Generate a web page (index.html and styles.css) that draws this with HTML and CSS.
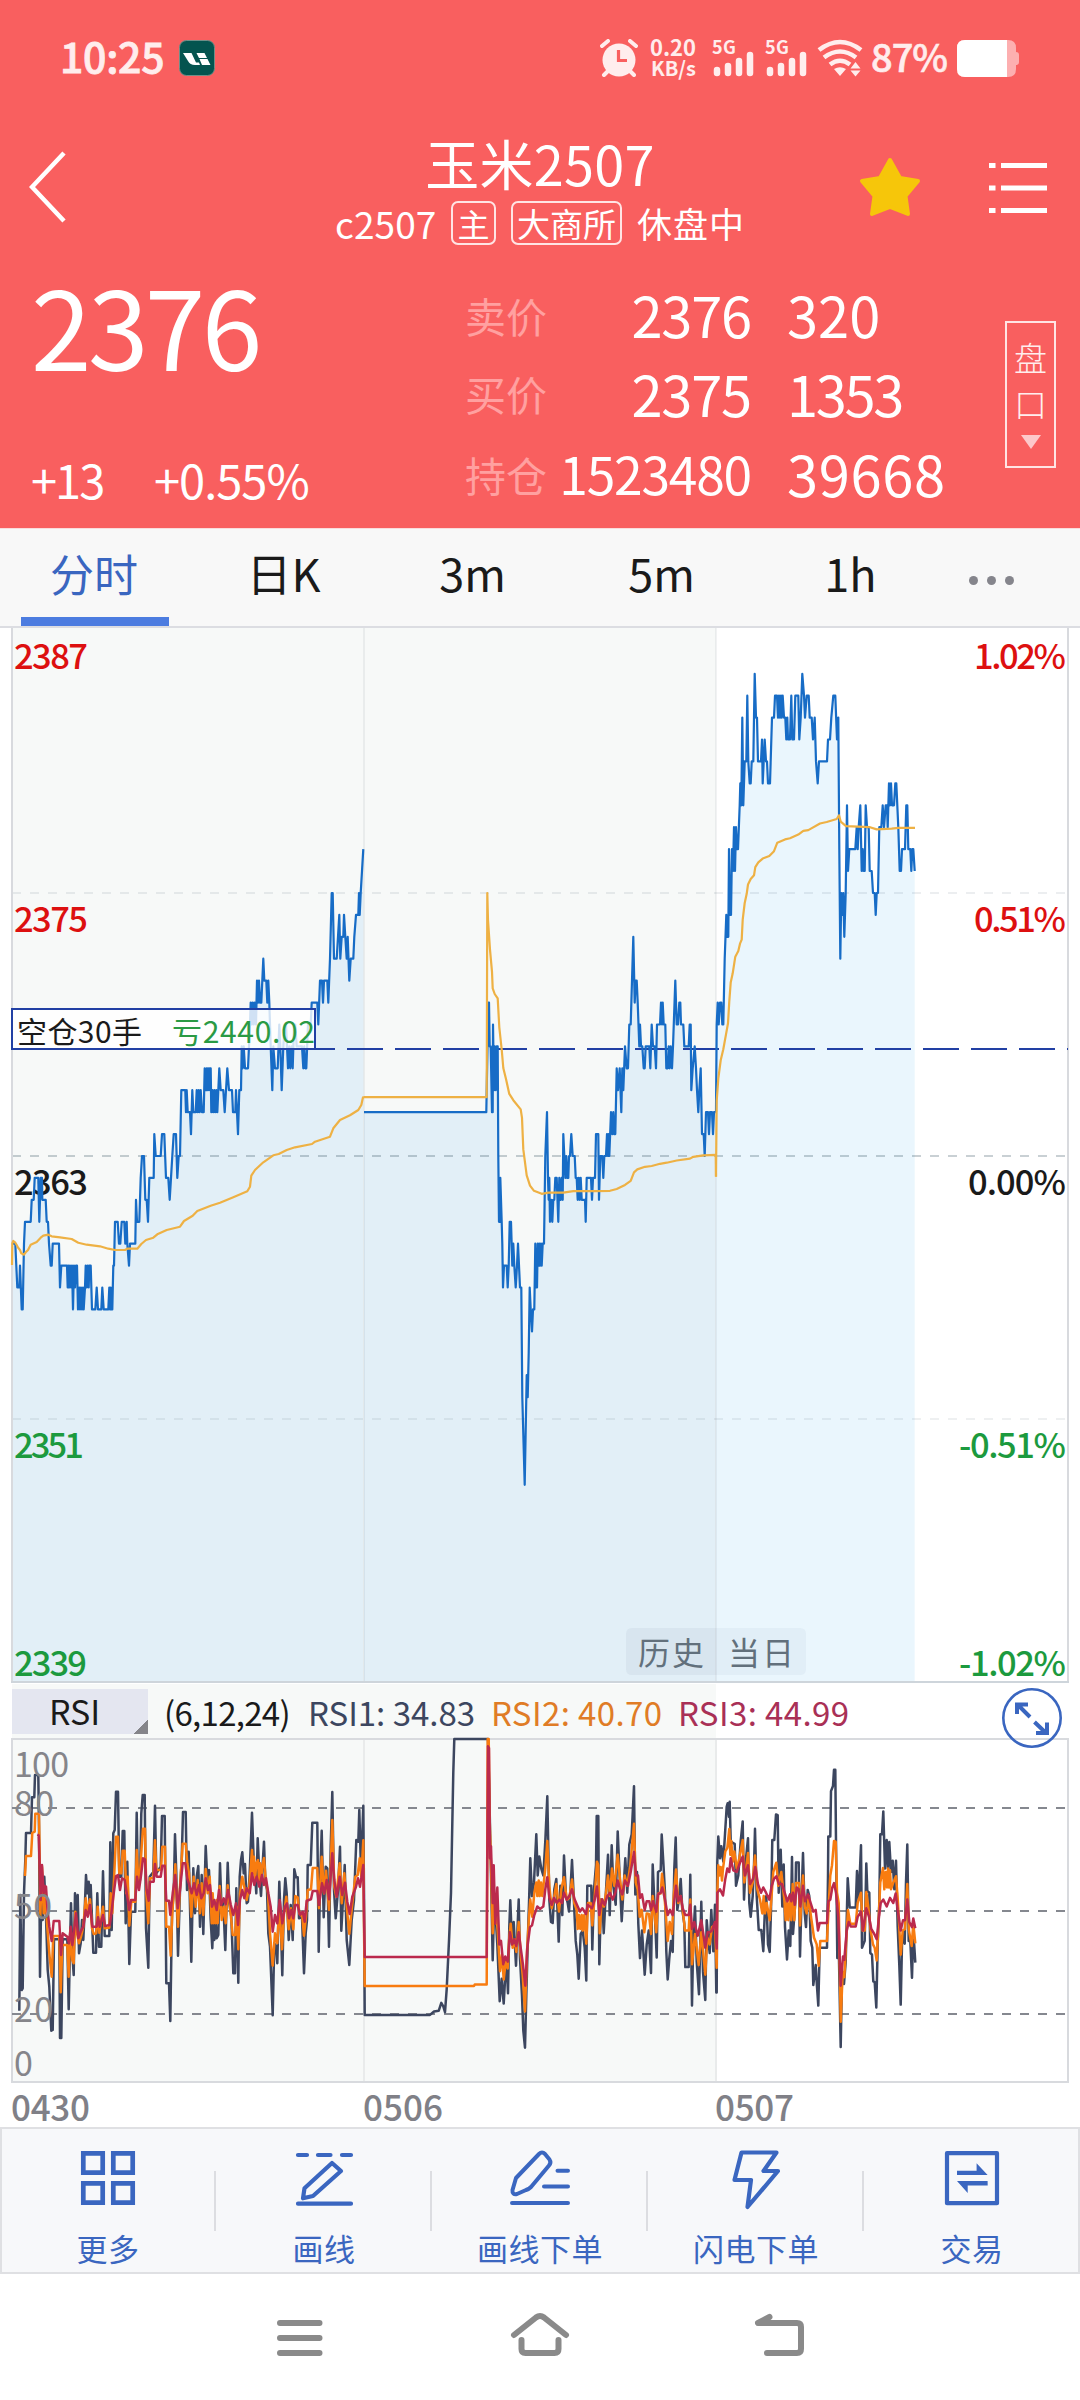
FILE: index.html
```
<!DOCTYPE html>
<html lang="zh-CN">
<head>
<meta charset="utf-8">
<title>玉米2507</title>
<link rel="stylesheet" href="styles.css">
</head>
<body>
<header class="top">
  <div class="status">
    <span class="clock">10:25</span>
    <svg class="app-badge" viewBox="0 0 36 36"><rect x=".5" y=".5" width="35" height="35" rx="7" fill="#04544f" stroke="#6f8f88"/><path d="M4 13h8.500l4.500 9.500h3l1 2.500H16Q11 25 9 21zM17.500 13h8l2.500 5H20zM20.500 19h8l3 6H23z" fill="#fff"/></svg>
    <svg class="alarm" viewBox="0 0 38 38"><circle cx="19" cy="21" r="16.500" fill="#ffeded"/><path d="M2 7l6-5M36 7l-6-5M8 32l-4 4M30 32l4 4" stroke="#ffeded" stroke-width="4" stroke-linecap="round"/><path d="M18.500 11v10.500H27" fill="none" stroke="#f95f5f" stroke-width="3.200"/></svg>
    <span class="speed"><b>0.20</b><b>KB/s</b></span>
    <svg class="signals" viewBox="0 0 96 38">
      <g id="sim"><text x="-2" y="15" class="sim-text" textLength="24">5G</text><path d="M3 31v3M14 27v7M25 22v12M36 16v18" stroke="#ffeded" stroke-width="6.500" stroke-linecap="round"/></g>
      <use href="#sim" x="53"/>
    </svg>
    <svg class="wifi" viewBox="0 0 46 38"><g fill="none" stroke="#ffeded" stroke-width="4.600"><path d="M2 11Q23-5 44 11"/><path d="M7 18.500Q23 6.500 39 18.500"/><path d="M13 25.500Q23 18 33 25.500"/></g><path d="M17 30q6-3.500 12 0l-6 7zM33.500 29.500l5-6.500 5 6.500zM33.500 31.500h10l-5 6z" fill="#ffeded"/></svg>
    <span class="percent">87%</span>
    <svg class="battery" viewBox="0 0 64 37"><path d="M9 0h43q8 0 8 8v4q3 0 3 3v7q0 3-3 3v4q0 8-8 8H9q-8 0-8-8V8q0-8 8-8z" fill="#fdafb0"/><path d="M9 0h42v37H9q-8 0-8-8V8q0-8 8-8z" fill="#fff"/></svg>
  </div>
  <div class="titlebar">
    <svg class="back" viewBox="0 0 38 72"><path d="M35 2L3 36l32 34" fill="none" stroke="#fff" stroke-width="4.500"/></svg>
    <div class="titles">
      <h1>玉米2507</h1>
      <div class="sub"><span class="code">c2507</span><span class="tag tag-main">主</span><span class="tag tag-ex">大商所</span><span class="state">休盘中</span></div>
    </div>
    <svg class="star" viewBox="0 0 62 60"><path d="M31 3l10 18 18 3-12.500 15L49 57 31 50 13 57l2.500-18L3 24l18-3z" fill="#f6c60a" stroke="#f6c60a" stroke-width="4" stroke-linejoin="round"/></svg>
    <svg class="list" viewBox="0 0 58 52"><path d="M0 3.500h6.500M12 3.500h46M0 26h6.500M12 26h46M0 48.500h6.500M12 48.500h46" stroke="#fff" stroke-width="5"/></svg>
  </div>
  <div class="quote">
    <div class="last">
      <div class="price">2376</div>
      <div class="change"><span class="diff">+13</span><span class="pct">+0.55%</span></div>
    </div>
    <div class="book">
      <span class="label">卖价</span><span class="value">2376</span><span class="volume">320</span>
      <span class="label">买价</span><span class="value">2375</span><span class="volume tight">1353</span>
      <span class="label">持仓</span><span class="value small">1523480</span><span class="volume wide">39668</span>
    </div>
    <div class="depth"><span>盘</span><span>口</span><i></i></div>
  </div>
</header>

<nav class="tabs">
  <a class="active">分时</a><a>日K</a><a>3m</a><a>5m</a><a>1h</a><a class="more"><i></i><i></i><i></i></a>
</nav>

<main>
  <svg class="price-chart" viewBox="0 628 1080 1056">
    <rect x="12" y="628" width="704" height="1054" fill="#f7f9f8"/>
    <g id="areas"></g>
    <g class="grid">
      <path d="M12 893H1066" stroke="#0b2a3a" stroke-opacity=".08"/>
      <path d="M12 1156H1066" stroke="#0b2a3a" stroke-opacity=".22"/>
      <path d="M12 1419H1066" stroke="#0b2a3a" stroke-opacity=".07"/>
    </g>
    <path d="M364 628V1682M716 628V1682" stroke="#0b2a3a" stroke-opacity=".06" stroke-width="2"/>
    <path d="M12 627V1682M1068 627V1682" stroke="#d8dade" stroke-width="2"/>
    <path d="M11 1682H1069" stroke="#ced5db" stroke-width="2"/>
    <g class="scale">
      <g fill="#dd1010"><text x="14" y="668.500" textLength="74">2387</text><text x="14" y="932" textLength="74">2375</text><text x="974" y="668.500" textLength="92">1.02%</text><text x="974" y="932" textLength="92">0.51%</text></g>
      <g fill="#1a1a1a"><text x="14" y="1194.500" textLength="74">2363</text><text x="968" y="1194.500" textLength="98">0.00%</text></g>
      <g fill="#1c9a3e"><text x="14" y="1457.500" textLength="70">2351</text><text x="14" y="1675.500" textLength="73">2339</text><text x="959" y="1457.500" textLength="107">-0.51%</text><text x="959" y="1675.500" textLength="107">-1.02%</text></g>
    </g>
    <path d="M299 1049H1068" stroke="#2240a4" stroke-width="2" stroke-dasharray="36 12"/>
    <g id="prices"></g>
    <rect x="12" y="1009" width="303" height="40" fill="#fff" fill-opacity=".8" stroke="#2240a4" stroke-width="2"/>
    <g class="holding"><text x="17" y="1042.500" fill="#1a1a1a" textLength="125">空仓30手</text><text x="172" y="1042.500" fill="#2a9a44" textLength="143">亏2440.02</text></g>
    <path d="M632 1628H716V1675H632q-6 0-6-6V1634q0-6 6-6z" fill="#30506a" fill-opacity=".055"/>
    <path d="M716 1628h84q6 0 6 6v35q0 6-6 6h-84z" fill="#30506a" fill-opacity=".045"/>
    <g class="period"><text x="638" y="1664.500" textLength="66">历史</text><text x="728" y="1664.500" textLength="66">当日</text></g>
  </svg>

  <div class="indicator">
    <span class="picker">RSI</span>
    <span class="params">(6,12,24)</span><span class="r1">RSI1: 34.83</span><span class="r2">RSI2: 40.70</span><span class="r3">RSI3: 44.99</span>
    <svg class="expand" viewBox="0 0 62 62"><circle cx="31" cy="31" r="28.700" fill="none"/><path d="M29 30L17 18M16 27V17.500H27M33.500 35L45 46M46 35.500V46H35" fill="none"/></svg>
  </div>

  <svg class="rsi-chart" viewBox="0 1738 1080 389">
    <rect x="12" y="1738" width="704" height="344" fill="#f7f9f8"/>
    <path d="M364 1739V2082M716 1739V2082" stroke="#e9ebeb" stroke-width="2"/>
    <path d="M12 1739H1068V2082H12z" fill="none" stroke="#d8dade" stroke-width="2"/>
    <g class="grid" stroke="#85888f"><path d="M12 1808H1066M12 1911H1066M12 2014H1066"/></g>
    <g id="rsi"></g>
    <g class="levels"><text x="14" y="1777" textLength="55">100</text><text x="14" y="1816" textLength="40">80</text><text x="14" y="1919" textLength="38">50</text><text x="14" y="2022" textLength="39">20</text><text x="14" y="2075.500" textLength="20">0</text></g>
    <g class="dates"><text x="11" y="2121" textLength="79">0430</text><text x="363" y="2121" textLength="80">0506</text><text x="715" y="2121" textLength="79">0507</text></g>
  </svg>
</main>

<nav class="toolbar">
  <a><svg viewBox="0 0 72 72"><path d="M11.300 8.300h19.400v19.400H11.300zM41.300 8.300h19.400v19.400H41.300zM11.300 38.300h19.400v19.400H11.300zM41.300 38.300h19.400v19.400H41.300z" stroke-width="4.700" stroke-linejoin="miter"/></svg>更多</a>
  <a><svg viewBox="0 0 72 72"><path d="M10 10h9M30 10h12.500M54 10h9M10 58.700h53M44 18l9 8-28 25-10 2.300 1.500-10z"/></svg>画线</a>
  <a><svg viewBox="0 0 72 72"><path d="M53.500 25.700H64M40 41.500H64M8 58H64M35 9q3-3 6 0l4.500 5.500q2 3-.5 6L27 42q-2 2-5 3l-9 4q-5 1-4.500-4L12 33z" stroke-width="4"/></svg>画线下单</a>
  <a><svg viewBox="0 0 72 72"><path d="M21.500 7.500H56.500L43.500 26H58L27.500 62 31 35H14.500z"/></svg>闪电下单</a>
  <a><svg viewBox="0 0 72 72"><path d="M11 8.200H61V58.200H11z"/><path d="M21 25.700h19.600V18.300L51.600 30H21zM51.600 36H21v0L31.700 48v-7.500h20z" fill="#3a66c0" stroke="none"/></svg>交易</a>
</nav>

<footer class="keys">
  <svg viewBox="0 0 64 50"><path d="M12 11h39.500M12 26h39.500M12 41h39.500"/></svg>
  <svg viewBox="0 0 64 50"><path d="M6 23L28 5.500Q32 2.500 36 5.500L58 23M13.500 28v9q0 4 4 4h29q4 0 4-4v-9"/></svg>
  <svg viewBox="0 0 64 50"><path d="M21.500 5L10 11H49q4 0 4 4v22q0 4-4 4H19"/></svg>
</footer>
<script src="chart.js"></script>
</body>
</html>
```

FILE: styles.css
```
* { box-sizing: border-box; }
body { margin: 0; width: 1080px; height: 2400px; background: #fff; color: #1a1a1a; font-family: "Noto Sans CJK SC", sans-serif; overflow: hidden; }
svg { display: block; flex: none; }
.top { height: 528px; background: #f95f5f; color: #fff; }

.status { display: flex; align-items: center; height: 116px; padding-left: 60px; color: #ffeded; }
.clock { width: 119px; font-size: 41px; font-weight: 500; line-height: 60px; letter-spacing: -.3px; transform: translateY(-3px); -webkit-text-stroke: .8px #ffeded; }
.app-badge { width: 36px; height: 36px; }
.alarm { width: 38px; height: 38px; margin-left: 385px; }
.speed { display: flex; flex-direction: column; width: 60px; padding-right: 2px; text-align: right; font-size: 20px; line-height: 22px; transform: translateY(-1px); }
.speed b:first-child { font-size: 22px; }
.signals { width: 96px; height: 38px; margin-left: 16px; overflow: visible; }
.sim-text { font-size: 18px; font-weight: 700; fill: #ffeded; }
.wifi { width: 46px; height: 38px; margin-left: 7px; }
.percent { width: 93px; padding-left: 8px; font-size: 38px; font-weight: 500; line-height: 60px; letter-spacing: -1px; transform: translateY(-2px); -webkit-text-stroke: .6px #ffeded; }
.battery { width: 64px; height: 37px; }

.titlebar { display: flex; height: 144px; }
.back { width: 38px; height: 72px; margin: 35px 0 0 29px; }
.titles { width: 474px; margin-left: 236px; padding-top: 16px; }
h1 { margin: 0; font-size: 54px; font-weight: 400; line-height: 62px; text-align: center; white-space: nowrap; letter-spacing: .3px; }
.sub { display: flex; align-items: center; height: 44px; margin-top: 7px; padding-left: 32px; font-size: 35px; line-height: 40px; }
.code { width: 116px; font-size: 37px; letter-spacing: .1px; }
.tag { display: flex; align-items: center; justify-content: center; height: 44px; border: 2px solid #ffe4e4; border-radius: 7px; line-height: 36px; font-size: 32px; }
.tag-main { width: 45px; margin-right: 15px; }
.tag-ex { width: 111px; margin-right: 15px; font-size: 33px; }
.state { letter-spacing: 1px; }
.star { width: 62px; height: 60px; margin: 41px 0 0 82px; }
.list { width: 58px; height: 52px; margin: 46px 0 0 68px; }

.quote { display: flex; height: 268px; }
.last { width: 466px; padding: 4px 0 0 31px; }
.price { font-size: 109px; line-height: 120px; letter-spacing: -3.600px; }
.change { display: flex; margin-top: 65px; font-size: 47px; line-height: 60px; }
.diff { width: 123px; letter-spacing: -2px; }
.pct { letter-spacing: -1px; }
.book { display: grid; grid-template-columns: 95px 190px 1fr; grid-template-rows: 78px 79px 82px; align-items: center; width: 539px; padding-top: 15px; align-content: start; line-height: 60px; }
.label { font-size: 41px; color: #ffa0a0; padding-top: 1px; margin-left: -1px; }
.value, .volume { font-size: 56px; letter-spacing: -1.200px; }
.value { text-align: right; }
.value.small { font-size: 51.500px; letter-spacing: -1.200px; margin-left: -10px; }
.volume { padding-left: 36px; letter-spacing: 0; }
.volume.tight { letter-spacing: -2.300px; }
.volume.wide { letter-spacing: .7px; }
.depth { display: flex; flex-direction: column; align-items: center; width: 51px; height: 147px; margin-top: 61px; padding-top: 11px; border: 2px solid #ffe4e4; font-size: 33px; font-weight: 300; line-height: 46px; color: #ffeeee; }
.depth i { margin-top: 9px; border: 10px solid transparent; border-top: 14px solid #fdc8ca; border-bottom: 0; }

.tabs { display: grid; grid-template-columns: repeat(5, 189px) 92px; height: 100px; background: #f8f8f8; border-top: 1px solid #fadcdc; border-bottom: 2px solid #dcdde2; font-size: 45px; line-height: 88px; text-align: center; }
.tabs .active { color: #3a66c0; border-bottom: 9px solid #4c7ce0; margin: 0 20px 0 21px; padding-right: 2px; font-size: 44px; }
.tabs .more { display: flex; justify-content: center; gap: 9px; padding-top: 47px; }
.more i { width: 9px; height: 9px; border-radius: 50%; background: #85858c; }

.price-chart { width: 1080px; height: 1056px; }
text { font-family: "Noto Sans CJK SC", sans-serif; }
.grid path { stroke-width: 2; stroke-dasharray: 9 9; }
.scale { font-size: 34.500px; font-weight: 500; }
.holding { font-size: 30px; }
.period { font-size: 32px; fill: #62707c; }
.series { fill: none; stroke-linejoin: round; stroke-width: 2.200; }
#rsi .series { stroke-width: 2.500; }

.indicator { display: flex; align-items: center; height: 54px; padding-left: 12px; font-size: 33px; line-height: 43px; white-space: nowrap; background: linear-gradient(90deg, #fff 12px, #f7f9f8 12px 716px, #fff 716px); }
.indicator > span { padding-top: 2px; }
.indicator > .picker { width: 136px; height: 45px; padding: 0 0 0 37px; background: linear-gradient(135deg, transparent 50%, #85858a 50%) right bottom / 15px 15px no-repeat #e4e6f0; font-size: 34px; line-height: 44px; }
.params { width: 144px; margin-left: 16px; letter-spacing: -.7px; }
.r1 { width: 183px; color: #3c465f; }
.r2 { width: 187px; color: #e07c26; letter-spacing: .4px; }
.r3 { width: 323px; color: #a93056; letter-spacing: .4px; }
.expand { width: 62px; height: 62px; position: relative; top: 7px; stroke: #3a66c0; stroke-width: 2.600; }
.expand path { stroke-width: 4; }

.rsi-chart { width: 1080px; height: 389px; overflow: visible; }
.levels { font-size: 34px; fill: #85858a; }
.dates { font-size: 35px; font-weight: 500; fill: #808087; }

.toolbar { display: grid; grid-template-columns: repeat(5, 1fr); height: 147px; background: #f7f8fa; box-shadow: inset 0 0 0 2px #dfe0e3; color: #3a66c0; font-size: 31px; line-height: 44px; text-align: center; letter-spacing: .5px; }
.toolbar a { padding-top: 18px; background: linear-gradient(#dcdde1, #dcdde1) right 44px / 2px 60px no-repeat; }
.toolbar a:last-child { background: none; }
.toolbar svg { width: 72px; height: 72px; margin: 0 auto 9px; fill: none; stroke: #3a66c0; stroke-width: 4.200; stroke-linejoin: round; stroke-linecap: round; }

.keys { display: flex; justify-content: center; gap: 176px; padding-top: 38px; }
.keys svg { width: 64px; height: 50px; fill: none; stroke: #8a8a8a; stroke-width: 6; stroke-linecap: round; stroke-linejoin: round; }
```

FILE: chart.js
```
// Each trading day has its own origin: x is stored in thirds of a pixel, prices in ticks from the previous settlement.
const BASE = 1156, TICK = 21.92, FLOOR = 1681;
const DAYS = [0, 350, 690];

const prices = [
  "37,-4 46,-4 52,-6 58,-6 60,-5 65,-7 68,-7 72,-4 75,-3 92,-3 95,-2 101,-2 104,-1 115,-1 118,-3 122,-1 126,-1 127,-2 137,-2 140,-3 144,-3 147,-4 152,-5 155,-5 158,-4 177,-4 180,-6 184,-5 201,-5 203,-6 205,-5 208,-6 210,-5 213,-6 216,-5 219,-7 222,-5 225,-6 228,-5 231,-5 234,-7 238,-6 240,-7 243,-6 246,-7 249,-6 251,-7 255,-6 257,-5 260,-6 263,-5 266,-6 268,-5 272,-5 276,-7 286,-7 290,-6 294,-7 304,-7 307,-6 311,-7 325,-7 328,-6 330,-7 332,-6 334,-7 337,-7 340,-5 342,-5 345,-3 353,-3 357,-4 361,-4 365,-3 373,-3 376,-4 380,-3 382,-4 387,-5 390,-4 406,-4 408,-2 411,-3 418,-3 422,-1 426,0 432,0 436,-2 440,-2 444,-3 448,-1 461,-1 463,1 467,0 482,0 486,1 493,1 498,-1 505,-1 509,-2 513,-1 517,0 521,1 528,1 532,-1 536,0 540,0 544,3 556,3 558,2 560,3 563,2 570,2 573,1 577,3 580,2 587,2 590,3 593,2 596,3 599,2 602,3 606,2 611,2 614,4 618,3 620,4 622,3 624,4 627,3 629,4 632,4 634,2 637,3 640,2 643,3 646,2 649,3 652,2 655,3 658,4 662,3 670,3 674,2 682,4 687,3 696,3 699,2 706,2 708,3 714,1 718,3 723,3 725,5 728,4 731,5 735,4 744,4 747,5 750,6 752,7 755,6 758,7 761,6 764,7 768,6 771,8 774,7 777,8 780,7 784,7 787,8 790,9 793,8 799,8 802,7 805,8 808,7 812,5 817,3 820,5 825,4 833,4 838,6 841,5 845,3 850,5 854,6 858,6 861,5 864,4 868,5 871,4 875,5 878,4 882,6 886,6 890,5 906,5 910,4 913,5 916,4 919,4 924,6 932,6 935,7 952,7 955,6 960,8 966,8 969,7 972,8 982,8 985,7 990,9 995,12 998,12 1002,9 1010,9 1014,10 1018,11 1021,9 1025,10 1030,10 1032,11 1036,10 1040,9 1043,10 1048,8 1052,9 1060,9 1063,10 1068,11 1075,11 1077,12 1079,11 1082,12 1086,13 1090,14",
  "42,2 409,2 415,7 417,7 419,5 422,5 426,2 428,2 429,6 432,3 434,5 437,3 440,5 443,5 445,0 447,-3 450,-3 451,-1 455,-3 457,-4 459,-6 462,-5 470,-5 473,-6 476,-5 479,-3 483,-3 487,-5 490,-4 493,-5 497,-6 501,-5 504,-4 507,-5 510,-6 514,-6 517,-11 524,-15 530,-10 533,-11 536,-9 539,-6 542,-7 546,-8 549,-7 553,-7 556,-4 559,-6 561,-6 563,-4 566,-5 568,-4 570,-5 573,-4 575,-5 578,-4 582,-4 586,0 591,2 594,-1 596,-2 598,-1 600,-3 604,-2 607,-3 610,-2 613,-2 616,-1 620,-1 625,-3 628,-1 632,-2 635,-1 638,-2 640,1 643,0 646,-1 649,0 652,-1 655,-1 657,0 660,0 664,1 668,0 674,0 677,-1 680,-1 683,-2 686,-1 689,-2 692,-1 695,-2 705,-2 707,-3 710,-1 723,-1 726,-2 729,-1 735,-1 738,1 745,1 747,-2 751,0 757,0 760,-1 763,0 768,0 771,1 774,0 776,1 778,0 783,2 787,1 790,2 793,1 796,1 800,4 804,3 809,4 814,2 817,4 820,3 825,5 830,4 834,4 838,6 842,6 850,10 854,7 857,8 860,8 863,7 868,5 870,6 873,5 877,5 881,4 884,4 887,5 898,5 901,4 905,6 909,5 914,5 918,4 921,6 930,6 933,7 936,6 938,7 941,6 946,6 949,4 953,4 956,5 959,4 962,5 966,4 969,5 976,8 980,6 984,6 988,7 991,7 993,6 1000,6 1003,5 1016,5 1019,6 1022,6 1024,3 1028,4 1034,5 1038,4 1041,3 1045,2 1048,3 1052,4 1056,1 1061,1 1064,0 1068,2 1074,2 1077,1 1080,2 1086,2 1089,1 1092,2 1097,2",
  "78,2 80,6 83,7 86,6 90,7 94,7 97,6 100,6 104,9 109,11 112,10 115,10 117,14 120,11 123,11 126,14 129,13 132,15 135,13 138,15 141,14 144,14 149,16 151,17 154,16 157,20 160,16 164,18 169,18 172,21 175,18 179,17 182,17 185,18 190,18 194,22 198,20 201,20 204,18 213,18 216,19 218,17 221,18 224,19 228,18 231,18 234,17 240,17 246,20 252,20 255,21 261,21 264,20 267,21 270,20 273,21 275,20 278,21 282,20 286,20 289,19 292,20 294,19 300,19 304,21 307,19 312,19 316,21 325,21 328,19 332,20 337,22 342,21 345,20 350,21 356,21 359,20 365,20 369,19 374,20 378,18 383,17 387,18 411,18 414,19 420,19 424,20 430,21 436,21 441,19 445,20 448,14 451,9 454,12 457,11 460,12 463,10 467,12 471,16 474,13 478,14 496,14 500,15 503,14 506,15 511,16 515,13 518,14 521,13 524,13 527,16 531,15 536,15 539,13 545,13 549,12 554,12 557,11 560,12 564,12 568,15 574,15 578,16 582,15 587,16 591,16 593,15 597,17 600,16 603,17 606,16 612,16 616,17 619,17 625,15 629,13 633,13 636,14 645,14 649,16 652,16 655,14 661,14 664,13 667,14 670,14 674,13"
];

const averages = [
  [0, 820, 3, "36,1335 37,1270 40,1263 46,1268 50,1275 55,1284 60,1290 64,1300 72,1304 77,1297 84,1290 92,1274 110,1266 122,1253 130,1247 145,1244 155,1249 180,1252 215,1257 235,1268 260,1274 300,1279 325,1286 345,1290 375,1290 382,1286 412,1286 424,1272 438,1260 460,1253 472,1243 500,1230 540,1220 552,1203 578,1187 592,1173 632,1157 660,1148 700,1132 742,1114 750,1100 754,1067 765,1050 790,1027 820,1006 836,1002 860,990 885,982 936,972 945,965 990,950 1000,925 1020,900 1050,886 1075,870 1084,855 1089,832 1092,832"],
  [350, 920, 2.703, "42,479 410,479 412,-73 414,0 420,80 426,140 428,185 434,200 443,212 448,290 455,350 460,400 468,430 478,470 490,487 512,512 516,535 520,620 530,690 540,718 552,732 575,740 595,737 640,737 670,733 735,733 780,732 800,727 825,716 842,705 852,682 862,674 885,667 905,665 930,659 950,656 980,650 1020,645 1030,640 1060,636 1097,635 1098,694"],
  [690, 620, 2.703, "78,1504 80,1300 85,1240 92,1190 100,1160 108,1120 114,1090 118,1030 122,980 128,955 136,910 145,895 150,875 155,864 158,810 164,765 170,740 174,715 182,700 192,690 196,668 205,655 218,645 238,638 252,625 262,602 285,593 300,590 325,580 340,570 355,568 390,550 410,546 440,538 447,528 452,545 468,557 540,560 560,566 605,564 625,562 675,562"]
];

const RSI1 = [
  [0, 1660, 3, "58,1052 61,705 65,990 68,985 72,700 76,600 78,519 93,519 96,412 103,412 105,345 115,345 117,500 120,950 124,700 128,780 133,650 138,770 143,930 148,980 154,1112 158,1110 162,838 178,838 180,1134 184,1134 188,838 202,838 206,1048 210,860 213,730 217,880 221,945 225,700 229,760 233,705 237,880 242,850 246,780 250,840 254,750 258,645 262,700 266,665 269,750 272,675 277,800 280,878 288,878 292,700 297,860 304,860 309,634 314,828 328,828 331,547 335,810 340,520 344,510 348,395 354,395 358,650 364,650 368,513 373,513 377,790 382,605 388,912 393,755 406,755 410,458 414,680 420,660 424,460 428,405 434,405 438,805 445,923 449,650 460,636 465,437 469,640 482,620 486,468 494,468 499,970 507,970 511,1083 516,760 521,700 525,523 529,640 534,887 540,690 545,600 549,456 557,456 561,690 566,575 570,740 574,905 580,625 585,760 590,650 595,618 600,800 605,645 610,822 617,558 622,660 627,630 632,780 637,865 640,780 643,840 646,770 650,835 655,825 660,610 665,760 670,730 676,870 683,608 688,730 694,770 700,940 705,940 709,685 715,968 719,650 723,600 727,577 731,640 735,612 740,730 744,725 749,640 756,458 761,600 765,640 769,700 773,535 778,640 783,708 788,610 792,545 796,660 801,690 805,820 810,860 818,1066 823,850 828,860 832,910 838,665 842,780 847,946 852,720 856,655 860,700 866,840 872,735 878,840 883,628 888,652 893,652 897,775 906,770 912,940 917,820 921,780 923,615 932,615 937,488 952,488 956,875 961,640 965,512 971,772 977,620 982,625 987,860 992,560 997,396 1002,690 1007,775 1014,690 1020,560 1024,812 1029,720 1034,615 1040,840 1048,915 1055,780 1062,720 1069,540 1075,545 1078,450 1083,630 1090,437 1092,700 1094,1065"],
  [350, 1600, 2.904, "45,1205 240,1205 252,1195 266,1193 274,1170 280,1180 285,1197 290,1130 297,990 303,850 307,650 310,500 313,404 414,404 418,560 423,800 428,1046 432,900 437,920 442,1000 449,1165 455,1100 461,1172 466,1090 470,1060 474,1142 478,950 481,872 486,1000 491,935 498,1062 503,940 506,870 510,1040 516,1150 520,1250 525,1300 529,1150 533,1000 537,880 541,750 546,860 552,820 559,680 563,800 568,745 574,780 580,800 586,700 592,570 598,870 603,935 608,938 613,840 619,810 626,992 631,830 637,915 642,742 648,860 653,880 657,905 662,830 666,755 671,860 677,990 682,1030 686,1100 692,970 698,960 704,1010 709,1105 712,830 724,830 727,1015 732,840 738,770 740,627 745,627 748,1058 753,870 757,870 761,968 767,860 774,740 779,915 785,712 790,830 797,885 803,672 808,780 815,933 821,830 826,750 832,850 838,710 845,680 852,541 856,855 861,790 865,940 870,1040 876,960 880,1020 884,1088 890,1000 896,960 903,1083 908,768 914,900 920,1038 924,790 932,785 935,681 940,760 945,850 949,1020 953,1102 958,1040 963,990 968,1022 973,780 977,690 982,900 987,870 992,810 997,900 1003,940 1006,1066 1016,1066 1021,798 1026,1178 1030,980 1035,890 1040,1050 1047,1145 1054,876 1059,1080 1066,1162 1070,930 1076,1000 1079,1025 1084,900 1090,1020 1095,885 1099,1140"],
  [690, 1600, 2.904, "80,1140 82,760 85,687 90,750 94,715 100,760 105,680 110,600 113,590 117,630 119,586 122,700 128,705 134,708 138,830 145,800 152,700 158,643 162,870 168,750 174,692 178,880 182,920 188,860 192,770 195,664 200,860 206,958 214,958 220,1020 225,890 229,860 234,1000 239,1022 243,900 247,697 253,697 258,623 263,625 266,850 272,725 277,890 281,768 285,950 291,1044 296,960 301,1005 306,746 309,970 316,880 318,762 326,762 330,1035 335,850 339,735 344,910 348,950 353,842 358,860 362,990 367,1010 370,1118 377,1060 380,1110 385,1178 389,1010 411,1010 414,800 415,687 421,687 423,555 429,540 432,493 436,493 438,700 442,1040 446,1000 449,1150 452,1298 456,1090 462,1115 467,1050 473,808 479,893 497,893 501,787 506,870 513,712 516,1010 524,990 529,765 532,845 538,850 541,1025 546,1030 550,1108 554,1110 559,1183 563,1000 568,880 571,680 576,680 580,614 585,780 590,697 594,780 598,703 603,790 608,757 613,840 618,757 623,950 628,1060 632,1175 636,1000 641,960 644,998 648,820 652,710 656,990 661,990 666,1097 670,960 676,1053"]
];

const RSI2 = [
  [0, 1660, 3, "75,648 78,588 93,588 97,519 104,515 106,461 117,461 119,600 121,770 126,620 131,760 136,700 141,790 148,880 155,950 160,828 178,828 182,997 187,855 202,855 206,950 211,810 217,900 221,910 226,755 231,820 237,850 243,830 250,800 257,715 262,760 270,718 276,805 281,822 289,820 293,740 298,818 309,740 314,805 328,803 332,700 337,760 343,640 348,530 354,530 358,640 364,640 368,572 374,572 379,700 383,650 388,797 394,725 406,725 410,570 415,660 420,640 425,560 429,506 435,506 439,700 445,790 450,655 460,655 465,541 469,630 483,630 487,560 495,560 499,800 507,800 512,887 517,760 522,680 526,613 530,720 534,800 540,680 548,551 557,551 562,610 567,640 574,770 581,650 587,740 593,660 600,760 605,670 610,765 617,627 623,700 629,650 635,790 638,700 641,790 644,730 647,790 650,720 653,790 659,678 665,780 671,740 677,790 683,676 690,740 698,825 706,825 710,740 715,868 720,700 727,650 733,680 740,720 748,680 756,570 759,640 762,590 765,660 769,610 774,600 777,660 780,610 783,660 787,620 792,594 797,660 804,700 810,820 818,917 825,820 832,850 838,735 846,868 852,760 859,710 866,808 873,745 880,808 886,708 893,712 898,760 907,770 912,827 918,770 923,690 933,688 938,624 952,624 957,745 965,590 972,700 978,632 987,750 992,620 997,480 1003,680 1009,710 1019,610 1025,730 1033,640 1040,740 1048,822 1056,740 1066,650 1073,645 1079,595 1084,650 1090,541 1092,800 1094,977"],
  [350, 1600, 2.904, "44,1121 372,1121 374,1117 410,1117 413,404 416,404 419,640 424,800 428,968 433,860 438,900 443,960 450,1078 456,1030 461,1102 467,1050 473,1070 477,990 482,940 488,1010 494,985 499,1022 506,935 512,1030 518,1090 525,1195 531,1020 537,920 541,870 547,920 553,850 559,820 562,860 566,815 569,860 573,820 577,860 586,780 592,700 598,830 605,895 611,870 619,825 627,905 634,840 642,805 650,870 658,865 666,812 673,880 680,900 683,955 687,915 691,955 695,915 698,960 703,915 709,998 714,880 722,880 727,945 734,860 741,760 745,770 749,968 755,870 762,890 768,850 774,800 780,860 786,780 793,830 803,740 810,810 817,870 824,800 832,830 841,770 852,650 857,820 863,840 869,920 875,900 883,965 890,910 897,912 903,970 908,860 919,965 925,852 932,852 936,795 942,840 948,920 953,990 959,935 966,970 971,860 978,783 985,880 992,860 998,900 1005,960 1016,960 1021,870 1026,1058 1035,970 1046,1060 1054,965 1066,1088 1072,980 1079,1000 1086,950 1095,945 1100,1068"],
  [690, 1600, 2.904, "80,1068 82,850 85,770 88,800 92,775 96,815 99,780 106,730 112,720 118,665 121,740 124,700 128,760 133,730 140,780 148,750 158,697 163,820 174,735 180,850 188,820 195,742 202,840 210,870 217,910 221,860 225,910 230,880 239,930 244,870 250,790 259,763 265,830 274,790 283,870 287,930 291,880 295,930 299,870 304,930 308,825 313,930 318,822 327,822 330,945 339,800 344,890 350,910 356,860 363,920 372,980 380,1000 386,1063 391,990 411,990 417,870 421,800 426,770 432,700 437,702 441,850 446,880 452,1225 458,1080 463,1095 468,1000 474,900 481,940 497,940 503,880 513,850 518,960 524,960 529,848 536,900 542,960 549,1000 554,1010 560,1047 565,950 571,820 579,778 583,840 587,790 591,835 594,780 597,835 600,785 603,840 610,820 618,802 624,880 632,1030 638,960 645,955 652,825 657,960 665,1005 670,940 676,997"]
];

const RSI3 = [
  [0, 1660, 3, "112,524 116,526 119,620 122,720 126,615 131,700 134,678 138,680 142,740 148,800 155,843 161,783 178,783 183,885 188,820 202,830 207,850 212,800 217,855 222,815 228,760 235,835 242,815 250,800 257,750 263,770 270,735 277,800 290,800 294,772 299,800 309,765 315,798 329,795 333,770 340,710 348,648 354,645 360,690 366,655 374,660 380,700 388,750 393,720 406,720 411,650 417,690 424,640 429,595 435,598 440,690 446,722 450,665 461,665 465,612 470,650 482,650 487,617 494,617 499,722 507,722 511,765 518,700 526,645 533,745 540,690 548,610 556,610 562,655 568,675 575,700 582,670 590,705 597,675 604,715 611,700 617,655 624,690 630,675 636,740 643,720 650,750 657,690 663,735 671,715 677,733 684,690 692,733 700,765 708,730 714,795 720,720 727,690 733,715 740,685 749,700 756,640 763,675 770,650 778,680 786,645 792,675 798,655 805,700 812,740 818,815 825,765 832,790 839,720 847,790 855,740 861,730 867,775 874,750 880,775 886,735 893,735 900,765 908,755 914,785 920,722 933,718 938,693 952,693 957,735 966,670 973,700 980,660 987,718 997,580 1003,660 1010,710 1019,650 1027,705 1035,668 1042,725 1049,762 1057,710 1068,680 1074,655 1080,680 1090,615 1092,760 1094,889"],
  [350, 1600, 2.904, "44,1037 410,1037 414,425 417,430 420,750 423,715 428,880 431,770 436,940 442,835 448,1000 453,990 460,1058 466,1035 473,1050 480,965 487,1000 493,985 499,1005 506,965 512,1010 519,1060 526,1120 532,1010 540,950 546,945 553,915 562,890 570,897 580,890 586,840 592,805 598,865 605,885 612,865 620,880 628,870 636,880 642,850 650,870 658,860 666,840 674,870 683,890 690,905 697,895 708,912 713,885 726,895 734,870 741,832 748,915 756,870 764,885 772,860 780,850 788,870 796,850 803,815 810,840 817,855 825,815 834,830 842,790 852,732 858,800 864,800 870,865 876,855 884,900 890,875 898,875 903,900 909,875 919,905 924,855 932,850 937,835 945,870 953,915 960,900 968,915 978,830 985,875 992,860 998,895 1006,915 1016,915 1021,885 1026,955 1033,935 1043,975 1054,930 1066,1010 1073,965 1079,965 1086,960 1095,935 1100,1012"],
  [690, 1600, 2.904, "80,1012 82,850 90,840 99,858 106,810 112,780 118,790 122,750 130,785 140,790 149,765 158,745 165,800 174,770 180,825 189,810 196,775 204,825 213,850 220,835 228,850 238,870 245,830 252,810 259,802 267,825 276,825 284,850 292,875 300,855 304,875 309,850 314,885 320,835 326,840 331,890 339,830 345,875 354,855 362,880 370,905 377,900 384,960 389,938 411,938 415,875 421,870 427,835 432,822 438,850 445,920 452,1120 459,1035 463,1045 470,960 476,935 482,948 497,948 503,920 513,905 519,960 529,895 537,920 544,955 553,970 560,985 567,920 572,880 580,870 590,890 600,865 610,880 617,852 623,900 632,960 639,930 645,930 652,870 658,935 666,950 670,925 676,953"]
];

const parse = s => s.split(" ").map(p => p.split(",").map(Number));
const toPath = pts => "M" + pts.map(p => p[0].toFixed(1) + " " + p[1].toFixed(1)).join("L");

function add(parent, d, attrs) {
  const el = document.createElementNS("http://www.w3.org/2000/svg", "path");
  el.setAttribute("d", d);
  for (const k in attrs) el.setAttribute(k, attrs[k]);
  document.getElementById(parent).appendChild(el);
}

function drawScaled(parent, series, stroke) {
  const pts = series.flatMap(([x, y, k, s]) => parse(s).map(p => [x + p[0] / 3, y + p[1] / k]));
  add(parent, toPath(pts), { class: "series", stroke });
}

prices.forEach((s, i) => {
  const pts = parse(s).map(p => [DAYS[i] + p[0] / 3, BASE - p[1] * TICK]);
  const first = pts[0][0], last = pts[pts.length - 1][0];
  add("areas", toPath(pts) + `L${last} ${FLOOR}L${first} ${FLOOR}z`, { fill: i < 2 ? "#e2eff7" : "#eaf6fd" });
  add("prices", toPath(pts), { class: "series", stroke: "#176cc6" });
});
averages.forEach(a => drawScaled("prices", [a], "#eeb144"));
drawScaled("rsi", RSI1, "#3c465f");
drawScaled("rsi", RSI2, "#f87c10");
drawScaled("rsi", RSI3, "#bb2a4d");
```
